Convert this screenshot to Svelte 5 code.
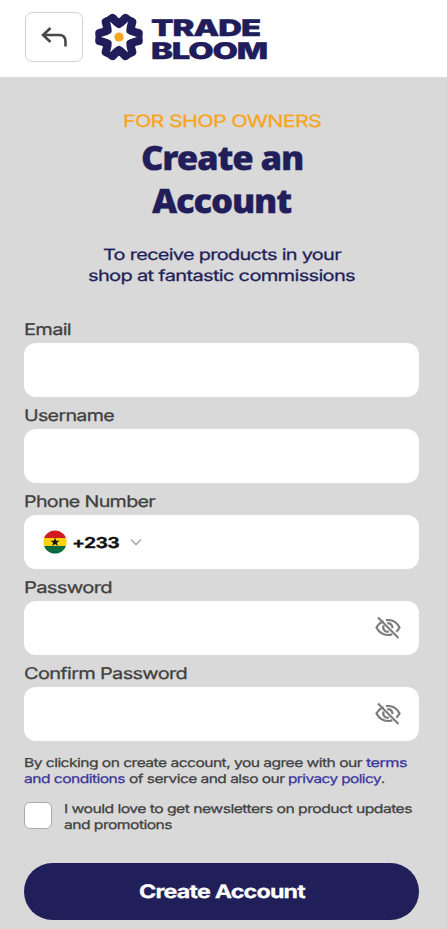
<script>
  const fields = [
    { id: 'email', label: 'Email', width: 47, type: 'email' },
    { id: 'username', label: 'Username', width: 90, type: 'text' },
    { id: 'phone', label: 'Phone Number', width: 131, type: 'tel' },
    { id: 'password', label: 'Password', width: 88, type: 'password' },
    { id: 'confirm', label: 'Confirm Password', width: 163, type: 'password' }
  ];
  const petals = [0, 60, 120, 180, 240, 300];
  const at = (deg, r) => {
    const a = (deg * Math.PI) / 180;
    return `${(25 + r * Math.cos(a)).toFixed(2)} ${(25 + r * Math.sin(a)).toFixed(2)}`;
  };
  const star = `M${at(0, 18)}` + petals.map((a) => `Q${at(a + 14, 9.5)} ${at(a + 30, 8.8)}Q${at(a + 46, 9.5)} ${at(a + 60, 18)}`).join('') + 'Z';
</script>

{#snippet wide(text, width, height, base)}
  <svg class="wide" {width} {height}><text x="0" y={base} textLength={width} lengthAdjust="spacingAndGlyphs">{text}</text></svg>
{/snippet}

<div class="page">
  <header>
    <button class="back" aria-label="Back">
      <svg width="28" height="22" viewBox="0 0 28 22"><path d="M10.5 2 3 9l7.500 7M3.500 9H19q6.500 0 6.500 6.500V20.500" /></svg>
    </button>
    <div class="logo">
      <svg width="50" height="50" viewBox="0 0 50 50">
        <circle cx="25" cy="25" r="18.800" fill="#201d5a" />
        <g fill="#201d5a" stroke="#201d5a" stroke-width="9" stroke-linejoin="round">
          {#each petals as a}<path transform="rotate({a} 25 25)" d="M25 25 39 20 44.300 21.300 43.900 25 44.300 28.700 39 30Z" />{/each}
        </g>
        <path fill="#fff" d={star} />
        <circle cx="25" cy="25" r="4.600" fill="#f7a51c" />
      </svg>
      <div class="brand">
        {@render wide('TRADE', 109, 22, 17.3)}
        {@render wide('BLOOM', 116, 22, 17.5)}
      </div>
    </div>
  </header>

  <main>
    <div class="eyebrow">{@render wide('FOR SHOP OWNERS', 198, 20, 16.7)}</div>
    <h1>
      {@render wide('Create an', 162, 43, 32)}
      {@render wide('Account', 139, 43, 32)}
    </h1>
    <div class="intro">
      {@render wide('To receive products in your', 238, 21, 16.4)}
      {@render wide('shop at fantastic commissions', 267, 21, 16.4)}
    </div>

    <form>
      {#each fields as f}
        <div class="field">
          <label for={f.id}>{@render wide(f.label, f.width, 20, 11.5)}</label>
          <div class="box">
            {#if f.id === 'phone'}
              <svg class="flag" width="24" height="24" viewBox="0 0 24 24">
                <clipPath id="disc"><circle cx="12" cy="12" r="11.600" /></clipPath>
                <g clip-path="url(#disc)">
                  <path fill="#d01c1f" d="M0 0h24v8H0z" /><path fill="#fcd20f" d="M0 8h24v8H0z" /><path fill="#0a6b3f" d="M0 16h24v8H0z" />
                </g>
                <path fill="#111" d="m12 7.500 1.100 3.200h3.400l-2.700 2 1 3.300L12 14l-2.800 2 1-3.300-2.700-2h3.400z" />
              </svg>
              <span class="code">{@render wide('+233', 47, 20, 15.7)}</span>
              <svg class="chevron" width="12" height="8" viewBox="0 0 12 8"><path d="m1 1.500 5 5 5-5" /></svg>
            {/if}
            <input id={f.id} type={f.type} />
            {#if f.type === 'password'}
              <svg class="eye" width="26" height="24" viewBox="0 0 26 24">
                <path d="M8.500 5.200Q4 6.800 1.500 11.500Q5.500 19 13 19q2.300 0 4.300-.8M11 4.200q9-1.500 13.500 7.300-1.300 2.500-3.200 4.200M8.600 9.500q-1.200 3 .9 5 1.900 1.800 4.500 1M12.300 7.100q4.800 0 5.300 5" />
                <path d="m3 1.500 20.500 20.500" />
              </svg>
            {/if}
          </div>
        </div>
      {/each}

      <div class="terms">
        <div class="row">
          {@render wide('By clicking on create account, you agree with our', 338, 16, 12)}
          <a href="#terms" class="next">{@render wide('terms', 41, 16, 12)}</a>
        </div>
        <div class="row">
          <a href="#terms">{@render wide('and conditions', 101, 16, 12.2)}</a>
          <span class="next">{@render wide('of service and also our', 155.5, 16, 12.2)}</span>
          <a href="#privacy" class="next">{@render wide('privacy policy', 93, 16, 12.2)}</a>{@render wide('.', 3.5, 16, 12.2)}
        </div>
      </div>

      <label class="newsletter">
        <input type="checkbox" />
        <span>
          {@render wide('I would love to get newsletters on product updates', 348, 16, 10.6)}
          {@render wide('and promotions', 108, 16, 10.6)}
        </span>
      </label>

      <button class="submit" type="button">{@render wide('Create Account', 166, 24, 18.8)}</button>
    </form>
  </main>
</div>

<style>
  :global(body) { margin: 0; background: #d9d9d9; }
  .page { height: 929px; overflow: hidden; background: #d9d9d9; font-family: Inter, "Liberation Sans", sans-serif; color: #404040; }
  .wide { display: block; flex: none; overflow: visible; fill: currentColor; stroke: currentColor; stroke-width: 0.25px; letter-spacing: -0.035em; text-rendering: geometricPrecision; }
  header { display: flex; box-sizing: border-box; height: 77px; padding: 12px 0 0 24.5px; background: #fff; }
  .back { display: flex; align-items: center; justify-content: center; width: 58.500px; height: 50px; padding: 0; border: 1px solid #d2d2d2; border-radius: 7px; background: #fff; }
  .back svg { fill: none; stroke: #484848; stroke-width: 2.600; }
  .logo { display: flex; margin-left: 11px; color: #201d5a; }
  .brand { margin: 6.500px 0 0 7px; font-size: 23px; font-weight: 900; }
  main { padding: 32.500px 28px 0 24.400px; }
  .eyebrow { display: flex; justify-content: center; color: #f7a51c; font-size: 17px; font-weight: 400; }
  h1 { display: flex; flex-direction: column; align-items: center; margin: 8px 0 20px; color: #211e5a; font: 900 33.500px "Noto Sans", "Open Sans", sans-serif; }
  .intro { display: flex; flex-direction: column; align-items: center; margin-bottom: 37.700px; color: #211e5a; font-size: 15.500px; font-weight: 400; }
  .field { margin-bottom: 12px; }
  .field label { display: block; font-size: 16px; font-weight: 400; }
  .box { display: flex; align-items: center; box-sizing: border-box; height: 54px; padding: 0 18.500px; border-radius: 12px; background: #fff; }
  .box input { flex: 1; min-width: 0; border: 0; outline: 0; background: none; font: 400 16px Inter, sans-serif; }
  .code { margin: 0 11px 0 5.500px; color: #111; font-size: 15px; font-weight: 700; }
  .chevron { fill: none; stroke: #aaa; stroke-width: 1.600; }
  .eye { fill: none; stroke: #7c7c7c; stroke-width: 2.200; }
  .terms { margin-top: 14px; font-size: 12.300px; font-weight: 400; }
  .row { display: flex; }
  .next { margin-left: 4px; }
  .row a { color: #3a359b; text-decoration: none; }
  .row span + .next { margin-left: 3.500px; }
  .newsletter { display: flex; align-items: flex-start; gap: 12px; margin-top: 14.500px; font-size: 12.300px; font-weight: 400; }
  .newsletter input { appearance: none; flex: none; width: 27.500px; height: 27.500px; margin: 0; border: 1px solid #aaa; border-radius: 6px; background: #fff; }
  .submit { display: flex; align-items: center; justify-content: center; width: 100%; height: 57px; margin-top: 29px; padding: 0; border: 0; border-radius: 29px; background: #211f59; color: #fff; font: 700 18.500px Inter, sans-serif; }
</style>
